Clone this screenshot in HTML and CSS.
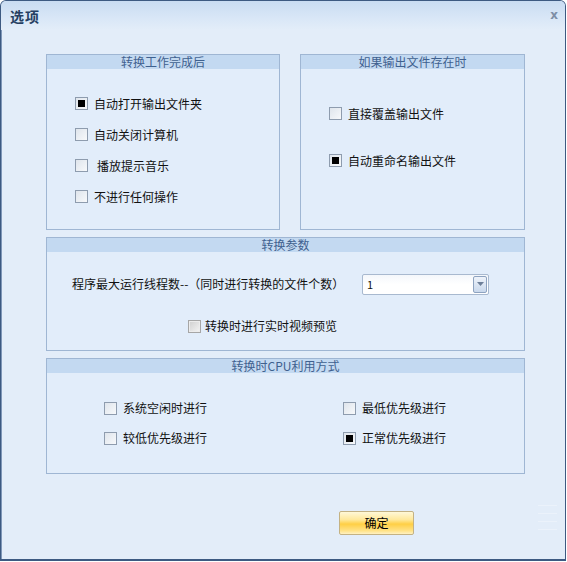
FILE: index.html
```html
<!DOCTYPE html>
<html lang="zh-CN">
<head>
<meta charset="utf-8">
<title>选项</title>
<link rel="stylesheet" href="styles.css">
</head>
<body>
<div class="window">
  <div class="titlebar">
    <span class="title">选项</span>
    <span class="close">x</span>
  </div>
  <div class="content">
    <div class="top-row">
      <section class="group g-finish">
        <div class="group-head">转换工作完成后</div>
        <div class="list list-finish">
          <label class="row"><span class="cb checked"></span><span class="txt">自动打开输出文件夹</span></label>
          <label class="row"><span class="cb"></span><span class="txt">自动关闭计算机</span></label>
          <label class="row"><span class="cb"></span><span class="txt pad">播放提示音乐</span></label>
          <label class="row"><span class="cb"></span><span class="txt">不进行任何操作</span></label>
        </div>
      </section>
      <section class="group g-exist">
        <div class="group-head">如果输出文件存在时</div>
        <div class="list list-exist">
          <label class="row"><span class="cb"></span><span class="txt">直接覆盖输出文件</span></label>
          <label class="row"><span class="cb checked"></span><span class="txt">自动重命名输出文件</span></label>
        </div>
      </section>
    </div>

    <section class="group g-params">
      <div class="group-head">转换参数</div>
      <div class="params">
        <div class="param-row">
          <span class="txt">程序最大运行线程数--（同时进行转换的文件个数）</span>
          <div class="select">
            <span class="select-val">1</span>
            <span class="select-btn">
              <svg width="7" height="4" viewBox="0 0 7 4"><path d="M0 0H7L3.5 4Z" fill="#6d7f99"/></svg>
            </span>
          </div>
        </div>
        <label class="row preview-row"><span class="cb disabled"></span><span class="txt">转换时进行实时视频预览</span></label>
      </div>
    </section>

    <section class="group g-cpu">
      <div class="group-head">转换时CPU利用方式</div>
      <div class="cpu-grid">
        <label class="row"><span class="cb"></span><span class="txt">系统空闲时进行</span></label>
        <label class="row"><span class="cb"></span><span class="txt">最低优先级进行</span></label>
        <label class="row"><span class="cb"></span><span class="txt">较低优先级进行</span></label>
        <label class="row"><span class="cb checked"></span><span class="txt">正常优先级进行</span></label>
      </div>
    </section>

    <div class="actions">
      <button class="btn-ok">确定</button>
      <div class="grip"><i></i><i></i><i></i><i></i></div>
    </div>
  </div>
</div>
</body>
</html>
```

FILE: styles.css
```css
html, body {
  margin: 0;
  padding: 0;
  background: #ffffff;
}
body {
  font-family: "Noto Sans CJK SC", "Liberation Sans", sans-serif;
  font-size: 12px;
  color: #111;
}
.window {
  width: 566px;
  height: 561px;
  box-sizing: border-box;
  border: 1px solid #3d5a82;
  border-bottom-width: 2px;
  border-radius: 6px 6px 0 0;
  background: #e3edf9;
  display: flex;
  flex-direction: column;
  overflow: hidden;
  box-shadow: inset 1px 0 0 #7f97b8;
}
.titlebar {
  height: 29px;
  flex: none;
  display: flex;
  align-items: center;
  justify-content: space-between;
  padding: 0 7px 0 9px;
  background: linear-gradient(#c9dcf2, #d9e7f7 60%, #e3edf9);
}
.title {
  font-size: 14px;
  font-weight: bold;
  color: #253f62;
  letter-spacing: 1px;
}
.close {
  font-family: "DejaVu Sans", sans-serif;
  font-weight: bold;
  font-size: 12px;
  color: #7d8ea6;
  margin-top: -2px;
}
.content {
  flex: 1;
  padding: 24px 0 0 45px;
  display: flex;
  flex-direction: column;
}
.top-row {
  display: flex;
  gap: 20px;
}
.group {
  box-sizing: border-box;
  border: 1px solid #9fb6d3;
  background: #e2edfa;
}
.group-head {
  height: 14px;
  line-height: 13px;
  background: #c3d9f1;
  text-align: center;
  color: #3f618f;
  font-size: 12px;
}
.g-finish { width: 234px; height: 176px; }
.g-exist { width: 225px; height: 176px; }
.g-params { width: 479px; height: 114px; margin-top: 7px; }
.g-cpu { width: 479px; height: 116px; margin-top: 7px; }

.row {
  display: flex;
  align-items: center;
  gap: 6px;
}
.txt { line-height: 16px; white-space: nowrap; }
.txt.pad { margin-left: 3px; }

.cb {
  width: 13px;
  height: 13px;
  box-sizing: border-box;
  border: 1px solid #8e9cae;
  background: linear-gradient(135deg, #dfe5ec, #f7f9fb);
  display: flex;
  align-items: center;
  justify-content: center;
  flex: none;
}
.cb.checked::after {
  content: "";
  width: 7px;
  height: 7px;
  background: #000;
}
.cb.disabled {
  border-color: #a6a6a6;
  background: linear-gradient(135deg, #cfcfcf, #f4f4f4);
  box-shadow: inset 0 0 0 1px #ececec;
}

.list-finish {
  padding: 19px 0 0 28px;
}
.list-finish .row { height: 31px; }
.list-exist {
  padding: 21px 0 0 28px;
}
.list-exist .row { height: 47px; }

.params {
  padding: 21px 0 0 25px;
  display: flex;
  flex-direction: column;
}
.param-row {
  display: grid;
  grid-template-columns: 290px 127px;
  align-items: center;
  height: 22px;
}
.select {
  height: 21px;
  box-sizing: border-box;
  border: 1px solid #a8b9cf;
  border-radius: 2px;
  background: linear-gradient(#f4f7fb, #ffffff 50%);
  display: flex;
  align-items: center;
  justify-content: space-between;
  padding: 0 1px 0 4px;
}
.select-val { font-size: 11px; }
.select-btn {
  width: 14px;
  height: 17px;
  box-sizing: border-box;
  border: 1px solid #8ea3c0;
  border-radius: 2px;
  background: linear-gradient(#eef3fa, #c9d8ec);
  display: flex;
  align-items: center;
  justify-content: center;
}
.preview-row {
  margin: 23px 0 0 116px;
  height: 16px;
  gap: 4px;
}

.cpu-grid {
  display: grid;
  grid-template-columns: 239px auto;
  grid-auto-rows: 30px;
  padding: 20px 0 0 57px;
}

.actions {
  display: flex;
  align-items: flex-start;
  margin-top: 37px;
  padding-left: 293px;
}
.btn-ok {
  width: 75px;
  height: 24px;
  box-sizing: border-box;
  border: 1px solid #c4b283;
  border-radius: 2px;
  background: linear-gradient(#fff8d8, #ffe89a 35%, #ffcf45 55%, #ffe287 85%, #fff1c2);
  font-family: "Noto Sans CJK SC", sans-serif;
  font-size: 12px;
  color: #000;
  padding: 0;
  line-height: 20px;
}
.grip {
  margin: -6px 0 0 124px;
  width: 19px;
  display: flex;
  flex-direction: column;
  gap: 7px;
}
.grip i {
  display: block;
  height: 1px;
  background: #ebf2fb;
}
```
